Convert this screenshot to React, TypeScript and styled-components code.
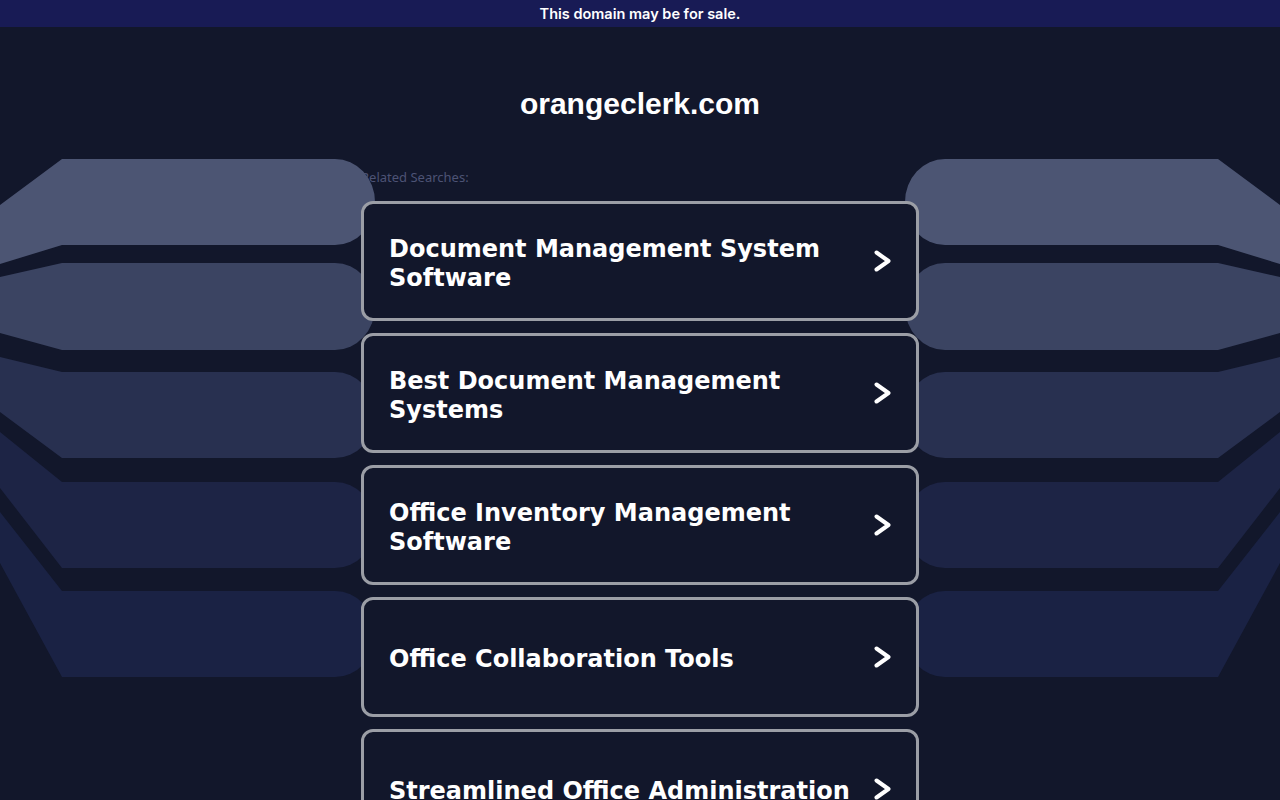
import styled, { createGlobalStyle } from 'styled-components';

const Globalstyles = createGlobalStyle`
html, body {
  margin: 0;
  padding: 0;
  background: #12172b;
}
body {
  font-family: "Liberation Sans", Arial, sans-serif;
}
`

const searches = [
  'Document Management System Software',
  'Best Document Management Systems',
  'Office Inventory Management Software',
  'Office Collaboration Tools',
  'Streamlined Office Administration',
]

// the five stripes of one wing, left side coordinates (x 0..375, y from 150px)
const stripes = [
  { fill: '#4c5573', top: 9, bottom: 95, l1: 55, l2: 114 },
  { fill: '#3b4462', top: 113, bottom: 200, l1: 127, l2: 183 },
  { fill: '#283050', top: 222, bottom: 308, l1: 207, l2: 262 },
  { fill: '#1d2445', top: 332, bottom: 418, l1: 282, l2: 338 },
  { fill: '#1a2244', top: 441, bottom: 527, l1: 362, l2: 413 },
]

const stripePath = (s: typeof stripes[number]) => {
  const mid = (s.top + s.bottom) / 2
  return `M62,${s.top} L335,${s.top} A40,${mid - s.top} 0 0 1 375,${mid} A40,${s.bottom - mid} 0 0 1 335,${s.bottom} L62,${s.bottom} L0,${s.l2} L0,${s.l1} Z`
}

const Wing = ({ side }: { side: 'left' | 'right' }) => (
  <WingSvg side={side} width="375" height="540" viewBox="0 0 375 540">
    {stripes.map((s, i) => (
      <path key={i} d={stripePath(s)} fill={s.fill} />
    ))}
  </WingSvg>
)

const Chevron = () => (
  <svg width="17" height="22" viewBox="0 0 17 22">
    <polyline points="2.5,2.5 14.5,11 2.5,19.5" fill="none" stroke="#fff" strokeWidth="4" strokeLinecap="round" strokeLinejoin="round" />
  </svg>
)

const App = () => {
  return (
    <Wrapper>
      <Globalstyles />
      <SaleBar>This domain may be for sale.</SaleBar>
      <Wing side="left" />
      <Wing side="right" />
      <Domain>orangeclerk.com</Domain>
      <Main>
        <Related>Related Searches:</Related>
        <List>
          {searches.map((s) => (
            <Card key={s}>
              <CardText>{s}</CardText>
              <Chevron />
            </Card>
          ))}
        </List>
      </Main>
    </Wrapper>
  )
}

export default App

const Wrapper = styled.div`
position: relative;
min-height: 100vh;
background: #12172b;
overflow: hidden;
padding-bottom: 40px;
`

const SaleBar = styled.div`
height: 27px;
display: flex;
align-items: center;
justify-content: center;
background: #181b55;
color: #fff;
font-family: Inter, "Noto Sans", sans-serif;
font-weight: 600;
font-size: 14.5px;
`

const WingSvg = styled.svg<{ side: 'left' | 'right' }>`
position: absolute;
top: 150px;
z-index: 1;
${(p) => (p.side === 'left' ? 'left: 0;' : 'right: 0; transform: scaleX(-1);')}
`

const Domain = styled.h1`
margin: 59px 0 0;
text-align: center;
color: #fff;
font-family: "Liberation Sans", Arial, sans-serif;
font-weight: 700;
font-size: 30px;
line-height: 36px;
`

const Main = styled.main`
width: 558px;
margin: 47px auto 0;
`

const Related = styled.div`
position: relative;
z-index: 0;
font-family: "Noto Sans", sans-serif;
font-size: 13px;
line-height: 16px;
color: #4d5375;
`

const List = styled.div`
margin-top: 16px;
display: flex;
flex-direction: column;
gap: 12px;
`

const Card = styled.a`
position: relative;
z-index: 2;
box-sizing: border-box;
height: 120px;
display: flex;
align-items: center;
gap: 20px;
padding: 0 25px;
background: #12172b;
border: 3px solid #9b9ea6;
border-radius: 12px;
cursor: pointer;
`

const CardText = styled.span`
flex: 1;
padding-top: 5px;
color: #fff;
font-family: "DejaVu Sans", Tahoma, sans-serif;
font-weight: 700;
font-size: 24px;
line-height: 29px;
`
